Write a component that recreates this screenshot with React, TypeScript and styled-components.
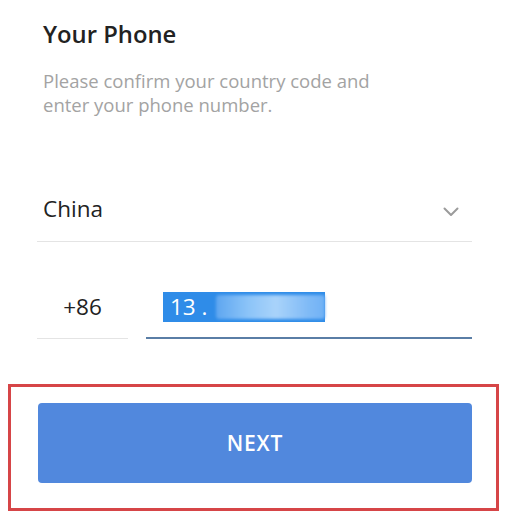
import React from "react";
import styled, { createGlobalStyle } from "styled-components";

const Global = createGlobalStyle`
  html, body { margin: 0; padding: 0; background: #ffffff; }
  body { font-family: "Open Sans", "Noto Sans", "DejaVu Sans", sans-serif; }
  * { box-sizing: border-box; }
`;

const Page = styled.div`
  width: 509px;
  height: 524px;
  display: flex;
  flex-direction: column;
  background: #ffffff;
  overflow: hidden;
`;

const Form = styled.div`
  display: flex;
  flex-direction: column;
  padding: 19px 37px 0 37px;
`;

const Title = styled.h1`
  margin: 0;
  padding-left: 6px;
  font-size: 23.8px;
  line-height: 30px;
  font-weight: 600;
  color: #222222;
`;

const Subtitle = styled.p`
  margin: 20px 0 0 0;
  padding-left: 6px;
  font-size: 18.5px;
  line-height: 24px;
  font-weight: 400;
  color: #a3a3a3;
`;

const CountryRow = styled.div`
  margin-top: 77px;
  display: flex;
  align-items: center;
  justify-content: space-between;
  padding: 0 13px 17px 6px;
  border-bottom: 1px solid #e4e4e4;
`;

const FieldText = styled.span`
  font-size: 22.5px;
  line-height: 30px;
  color: #222222;
`;

const Chevron = styled.svg`
  width: 16px;
  height: 10px;
  margin-top: 6px;
`;

const PhoneRow = styled.div`
  margin-top: 50px;
  display: flex;
  align-items: flex-end;
  gap: 18px;
`;

const CodeField = styled.div`
  width: 91px;
  display: flex;
  justify-content: center;
  padding-bottom: 16px;
  border-bottom: 1px solid #e4e4e4;
`;

const NumberField = styled.div`
  flex: 1;
  display: flex;
  align-items: center;
  padding: 0 0 15px 17px;
  border-bottom: 2px solid #5a7ea6;
`;

const Selection = styled.div`
  display: flex;
  align-items: center;
  width: 162px;
  height: 30px;
  padding-left: 7px;
  background: #2f8ce8;
`;

const Digits = styled.span`
  display: block;
  color: #ffffff;
  font-size: 22.5px;
  line-height: 30px;
  font-weight: 400;
  white-space: pre;
`;

const Smudge = styled.span`
  display: block;
  margin-left: 8px;
  width: 120px;
  height: 24px;
  border-radius: 3px;
  background: linear-gradient(90deg, #5ea6f0 0%, #8cc4f8 30%, #a9d3fa 55%, #7fbaf6 85%, #6fb1f5 100%);
  filter: blur(1.5px);
`;

const HighlightBox = styled.div`
  margin: 45px 10px 0 8px;
  height: 127px;
  border: 3px solid #d64547;
  padding: 16px 24px 0 27px;
`;

const NextButton = styled.button`
  width: 100%;
  height: 80px;
  border: none;
  border-radius: 4px;
  background: #5188dd;
  color: #ffffff;
  font-family: "Open Sans", "Noto Sans", sans-serif;
  font-size: 21px;
  font-weight: 600;
  letter-spacing: 0.8px;
  cursor: pointer;
`;

export default function App() {
  return (
    <>
      <Global />
      <Page>
        <Form>
          <Title>Your Phone</Title>
          <Subtitle>
            Please confirm your country code and
            <br />
            enter your phone number.
          </Subtitle>
          <CountryRow>
            <FieldText>China</FieldText>
            <Chevron viewBox="0 0 16 10" fill="none">
              <path d="M1.5 1.5 L8 8 L14.5 1.5" stroke="#9b9b9b" strokeWidth="2" strokeLinecap="round" strokeLinejoin="round" />
            </Chevron>
          </CountryRow>
          <PhoneRow>
            <CodeField>
              <FieldText>+86</FieldText>
            </CodeField>
            <NumberField>
              <Selection>
                <Digits>13 .</Digits>
                <Smudge />
              </Selection>
            </NumberField>
          </PhoneRow>
        </Form>
        <HighlightBox>
          <NextButton>NEXT</NextButton>
        </HighlightBox>
      </Page>
    </>
  );
}
